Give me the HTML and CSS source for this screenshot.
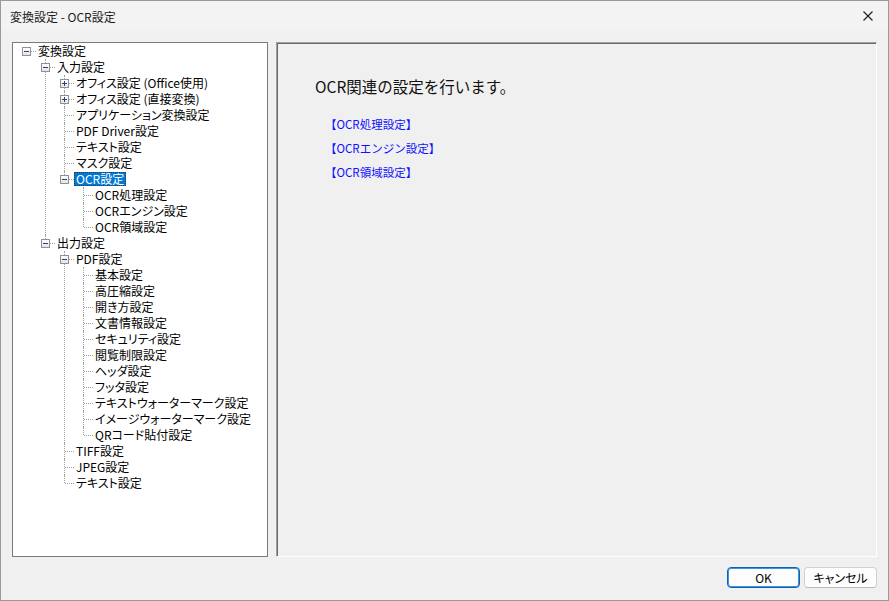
FILE: index.html
```html
<!DOCTYPE html>
<html lang="ja">
<head>
    <meta charset="UTF-8">
    <title>変換設定 - OCR設定</title>
    <link rel="stylesheet" href="styles.css">
</head>
<body>
<div class="window">
    <div class="titlebar">
        <span class="title">変換設定 - OCR設定</span>
        <span class="close">
            <svg width="10" height="10" viewBox="0 0 10 10"><path d="M0.5 0.5L9.5 9.5M9.5 0.5L0.5 9.5" stroke="#1b1b1b" stroke-width="1.1"/></svg>
        </span>
    </div>

    <div class="panes">
        <div class="tree-box">
            <ul class="tree">
                <li>
                    <div class="row"><span class="twig"><span class="box"></span></span><span class="label">変換設定</span></div>
                    <ul>
                        <li>
                            <div class="row"><span class="twig"><span class="box"></span></span><span class="label">入力設定</span></div>
                            <ul>
                                <li><div class="row"><span class="twig"><span class="box plus"></span></span><span class="label">オフィス設定 (Office使用)</span></div></li>
                                <li><div class="row"><span class="twig"><span class="box plus"></span></span><span class="label">オフィス設定 (直接変換)</span></div></li>
                                <li><div class="row"><span class="twig"></span><span class="label">アプリケーション変換設定</span></div></li>
                                <li><div class="row"><span class="twig"></span><span class="label">PDF Driver設定</span></div></li>
                                <li><div class="row"><span class="twig"></span><span class="label">テキスト設定</span></div></li>
                                <li><div class="row"><span class="twig"></span><span class="label">マスク設定</span></div></li>
                                <li>
                                    <div class="row"><span class="twig"><span class="box"></span></span><span class="label selected">OCR設定</span></div>
                                    <ul>
                                        <li><div class="row"><span class="twig"></span><span class="label">OCR処理設定</span></div></li>
                                        <li><div class="row"><span class="twig"></span><span class="label">OCRエンジン設定</span></div></li>
                                        <li><div class="row"><span class="twig"></span><span class="label">OCR領域設定</span></div></li>
                                    </ul>
                                </li>
                            </ul>
                        </li>
                        <li>
                            <div class="row"><span class="twig"><span class="box"></span></span><span class="label">出力設定</span></div>
                            <ul>
                                <li>
                                    <div class="row"><span class="twig"><span class="box"></span></span><span class="label">PDF設定</span></div>
                                    <ul>
                                        <li><div class="row"><span class="twig"></span><span class="label">基本設定</span></div></li>
                                        <li><div class="row"><span class="twig"></span><span class="label">高圧縮設定</span></div></li>
                                        <li><div class="row"><span class="twig"></span><span class="label">開き方設定</span></div></li>
                                        <li><div class="row"><span class="twig"></span><span class="label">文書情報設定</span></div></li>
                                        <li><div class="row"><span class="twig"></span><span class="label">セキュリティ設定</span></div></li>
                                        <li><div class="row"><span class="twig"></span><span class="label">閲覧制限設定</span></div></li>
                                        <li><div class="row"><span class="twig"></span><span class="label">ヘッダ設定</span></div></li>
                                        <li><div class="row"><span class="twig"></span><span class="label">フッタ設定</span></div></li>
                                        <li><div class="row"><span class="twig"></span><span class="label">テキストウォーターマーク設定</span></div></li>
                                        <li><div class="row"><span class="twig"></span><span class="label">イメージウォーターマーク設定</span></div></li>
                                        <li><div class="row"><span class="twig"></span><span class="label">QRコード貼付設定</span></div></li>
                                    </ul>
                                </li>
                                <li><div class="row"><span class="twig"></span><span class="label">TIFF設定</span></div></li>
                                <li><div class="row"><span class="twig"></span><span class="label">JPEG設定</span></div></li>
                                <li><div class="row"><span class="twig"></span><span class="label">テキスト設定</span></div></li>
                            </ul>
                        </li>
                    </ul>
                </li>
            </ul>
        </div>

        <div class="detail">
            <p class="lead">OCR関連の設定を行います。</p>
            <div class="links">
                <a href="#">【OCR処理設定】</a>
                <a href="#">【OCRエンジン設定】</a>
                <a href="#">【OCR領域設定】</a>
            </div>
        </div>
    </div>

    <div class="footer">
        <button class="btn default">OK</button>
        <button class="btn">キャンセル</button>
    </div>
</div>
</body>
</html>
```

FILE: styles.css
```css
* {
    box-sizing: border-box;
}

body {
    margin: 0;
    width: 889px;
    height: 601px;
    overflow: hidden;
    font-family: "Noto Sans CJK JP", "Noto Sans", sans-serif;
    font-size: 12px;
    color: #000;
}

.window {
    width: 889px;
    height: 601px;
    border: 1px solid #9a9a9a;
    background: #f0f0f0;
}

.titlebar {
    height: 30px;
    display: flex;
    align-items: center;
    justify-content: space-between;
    padding-left: 9px;
    background: #f3f3f3;
}

.title {
    font-size: 12px;
    color: #1b1b1b;
}

.close {
    width: 41px;
    height: 30px;
    display: flex;
    align-items: center;
    justify-content: center;
}

.panes {
    display: flex;
    gap: 8px;
    margin-top: 11px;
    padding: 0 11px;
    height: 515px;
}

/* tree view */
.tree-box {
    width: 256px;
    flex: none;
    background: #fff;
    border: 1px solid #7a7a7a;
}

.tree,
.tree ul {
    list-style: none;
    margin: 0;
    padding: 0;
}

.tree {
    padding-left: 4px;
}

.tree ul {
    padding-left: 19px;
}

.tree li {
    position: relative;
}

.tree ul > li::before {
    content: "";
    position: absolute;
    left: 9px;
    top: 0;
    bottom: 0;
    border-left: 1px dotted #a0a0a0;
}

.tree ul > li:last-child::before {
    bottom: auto;
    height: 8px;
}

.row {
    display: flex;
    align-items: center;
    height: 16px;
}

.twig {
    position: relative;
    width: 19px;
    height: 16px;
    flex: none;
}

.twig::after {
    content: "";
    position: absolute;
    left: 10px;
    right: 0;
    top: 8px;
    border-top: 1px dotted #a0a0a0;
}

.box {
    position: absolute;
    left: 5px;
    top: 4px;
    width: 9px;
    height: 9px;
    border: 1px solid #919191;
    background: linear-gradient(#ffffff, #e4e4e4);
    z-index: 1;
}

.box::before {
    content: "";
    position: absolute;
    left: 1px;
    top: 3px;
    width: 5px;
    height: 1px;
    background: #24418f;
}

.box.plus::after {
    content: "";
    position: absolute;
    left: 3px;
    top: 1px;
    width: 1px;
    height: 5px;
    background: #24418f;
}

.label {
    line-height: 12px;
    padding: 0 1px;
    border: 1px solid transparent;
    white-space: nowrap;
    font-feature-settings: "palt";
}

.label.selected {
    background: #0078d7;
    color: #fff;
    border: 1px dotted #3a3a3a;
}

/* right pane */
.detail {
    width: 601px;
    flex: none;
    border-top: 1px solid #a0a0a0;
    border-left: 1px solid #a0a0a0;
    border-right: 1px solid #fff;
    border-bottom: 1px solid #fff;
    box-shadow: inset 1px 1px 0 #696969;
    padding: 33px 0 0 38px;
}

.lead {
    margin: 0;
    font-size: 15.5px;
    line-height: 20px;
    color: #111;
}

.links {
    display: flex;
    flex-direction: column;
    margin-top: 16px;
    padding-left: 10px;
}

.links a {
    color: #1010ff;
    text-decoration: none;
    font-size: 11.5px;
    line-height: 24px;
}

/* buttons */
.footer {
    display: flex;
    justify-content: flex-end;
    gap: 4px;
    margin-top: 10px;
    padding-right: 11px;
}

.btn {
    width: 73px;
    height: 21px;
    padding: 0;
    font-family: inherit;
    font-size: 12px;
    line-height: 18px;
    color: #000;
    background: #fdfdfd;
    border: 1px solid #d0d0d0;
    border-bottom-color: #bcbcbc;
    border-radius: 4px;
    font-feature-settings: "palt";
}

.btn.default {
    border: 1px solid #0067c0;
    box-shadow: inset 0 0 0 1px #4a90d0;
}
```
